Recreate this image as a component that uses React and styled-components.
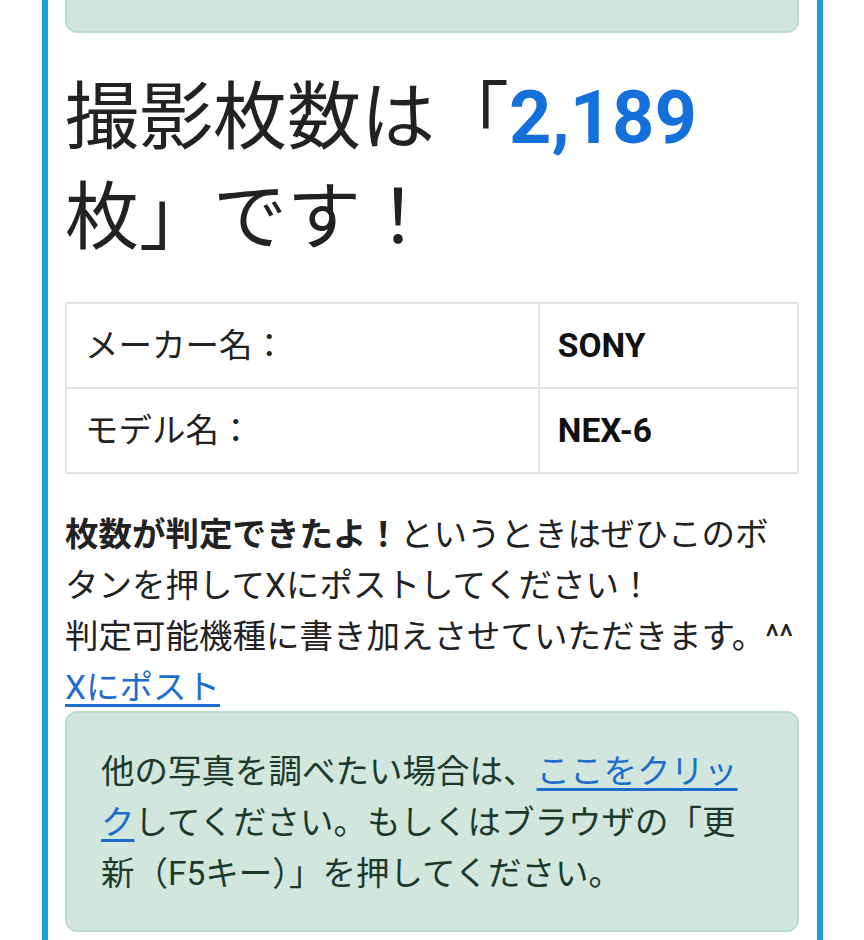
import React from "react";
import styled, { createGlobalStyle } from "styled-components";

const Global = createGlobalStyle`
  html, body { margin: 0; padding: 0; background: #fff; }
  body {
    font-family: Roboto, "Noto Sans CJK JP", sans-serif;
    color: #212529;
    font-size: 33.5px;
    line-height: 51px;
  }
`;

const Frame = styled.div`
  margin: 0 41px 0 42px;
  border: 6px solid #1c9fdf;
  border-top: none;
  padding: 0 18px 40px 17px;
  min-height: 960px;
  box-sizing: border-box;
`;

const Alert = styled.div`
  background: #d1e7dd;
  border: 2px solid #bcdccd;
  border-radius: 12px;
  color: #1b3a2c;
  box-sizing: border-box;
  padding: ${(p) => (p.$cropped ? "0" : "33px 34px 31px")};
  ${(p) =>
    p.$cropped &&
    `
    height: 33px;
    border-top: none;
    border-radius: 0 0 12px 12px;
  `}
`;

const Heading = styled.h2`
  margin: 35px 0 34px;
  font-size: 74px;
  line-height: 100px;
  font-weight: 400;
  color: #222;
`;

const Count = styled.span`
  color: #1570dc;
  font-weight: 700;
`;

const Table = styled.table`
  width: 100%;
  border-collapse: collapse;
  margin: 0 0 35px;
`;

const Cell = styled.td`
  border: 2px solid #e3e3e3;
  height: 83px;
  padding: 0 18px;
  font-weight: ${(p) => (p.$value ? 700 : 400)};
  width: ${(p) => (p.$value ? "auto" : "64.6%")};
  color: ${(p) => (p.$value ? "#111" : "#222")};
  vertical-align: middle;
`;

const Text = styled.p`
  margin: 0;
  color: #222;
`;

const Link = styled.a`
  color: #1f6ccf;
  text-decoration: underline;
  text-decoration-thickness: 3px;
  text-underline-offset: 5px;
`;

const LinkLine = styled.div`
  margin: 0 0 -2px;
`;

export default function App() {
  return (
    <>
      <Global />
      <Frame>
        <Alert $cropped />
        <Heading>
          撮影枚数は「<Count>2,189</Count>枚」です！
        </Heading>
        <Table>
          <tbody>
            <tr>
              <Cell>メーカー名：</Cell>
              <Cell $value>SONY</Cell>
            </tr>
            <tr>
              <Cell>モデル名：</Cell>
              <Cell $value>NEX-6</Cell>
            </tr>
          </tbody>
        </Table>
        <Text>
          <b>枚数が判定できたよ！</b>というときはぜひこのボタンを押してXにポストしてください！
          <br />
          判定可能機種に書き加えさせていただきます。^^
        </Text>
        <LinkLine>
          <Link href="#">Xにポスト</Link>
        </LinkLine>
        <Alert>
          他の写真を調べたい場合は、<Link href="#">ここをクリック</Link>
          してください。もしくはブラウザの「更新（F5キー）」を押してください。
        </Alert>
      </Frame>
    </>
  );
}
